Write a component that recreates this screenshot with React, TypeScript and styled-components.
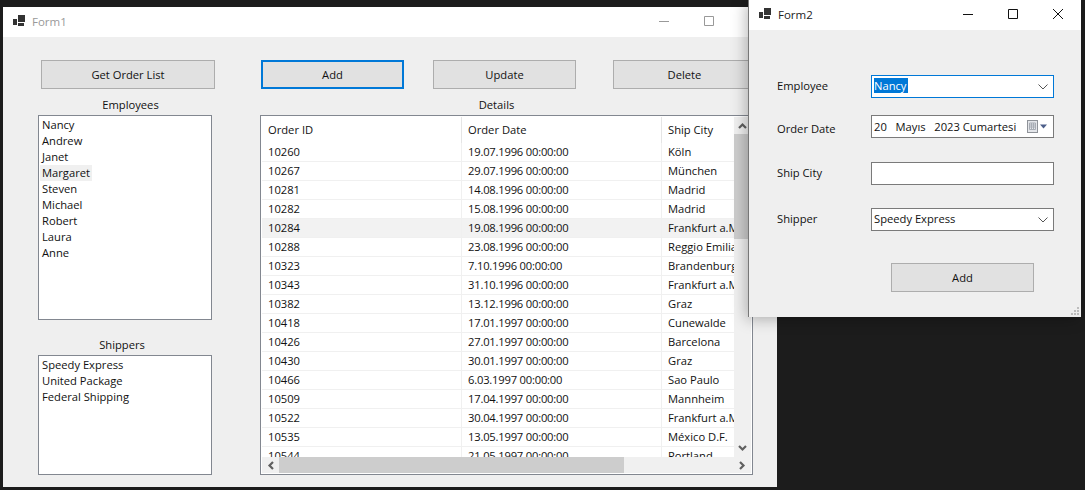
import React from "react";
import styled, { createGlobalStyle } from "styled-components";

const GlobalStyle = createGlobalStyle`
  html, body {
    margin: 0;
    height: 100%;
    background: #1c1c1c;
    overflow: hidden;
  }
  body {
    font-family: "Open Sans", "Noto Sans", "Liberation Sans", sans-serif;
    font-size: 11.2px;
    color: #111;
  }
`;

const Desktop = styled.div`
  position: relative;
  width: 1085px;
  height: 490px;
  background: #1c1c1c;
`;

const Window = styled.div<{ $front?: boolean }>`
  position: absolute;
  top: ${({ $front }) => ($front ? "0" : "7px")};
  left: ${({ $front }) => ($front ? "749px" : "3px")};
  width: ${({ $front }) => ($front ? "332px" : "774px")};
  height: ${({ $front }) => ($front ? "317px" : "480px")};
  background: #efefef;
  display: flex;
  flex-direction: column;
  z-index: ${({ $front }) => ($front ? 2 : 1)};
  box-shadow: ${({ $front }) => ($front ? "-1px 0 0 #777, -3px 2px 14px rgba(0, 0, 0, 0.28)" : "none")};
`;

const TitleBar = styled.div`
  box-sizing: border-box;
  height: 30px;
  padding-bottom: 2px;
  flex: none;
  background: #fff;
  display: flex;
  align-items: center;
`;

const AppIcon = styled.svg`
  margin-left: 10px;
  margin-top: -1px;
  width: 12px;
  height: 11px;
  flex: none;
`;

const Title = styled.span<{ $dim?: boolean }>`
  margin-left: 7px;
  font-size: 11.5px;
  color: ${({ $dim }) => ($dim ? "#999" : "#222")};
`;

const Caption = styled.div`
  margin-left: auto;
  padding-right: 1px;
  display: flex;
`;

const CaptionButton = styled.div`
  width: 45px;
  height: 28px;
  display: flex;
  align-items: center;
  justify-content: center;
`;

const Form1Body = styled.div`
  flex: 1;
  display: flex;
  padding: 23px 0 0 35px;
  min-height: 0;
`;

const LeftColumn = styled.div`
  width: 178px;
  margin-right: 44px;
  display: flex;
  flex-direction: column;
`;

const RightColumn = styled.div`
  width: 497px;
  display: flex;
  flex-direction: column;
`;

const ActionRow = styled.div`
  display: flex;
  padding-left: 1px;
  height: 29px;
  flex: none;
`;

const Button = styled.button<{ $focused?: boolean; $gap?: number }>`
  box-sizing: border-box;
  width: 143px;
  margin-right: ${({ $gap }) => $gap ?? 0}px;
  height: 29px;
  padding: 0;
  flex: none;
  background: #e1e1e1;
  border: ${({ $focused }) => ($focused ? "2px solid #0078d7" : "1px solid #adadad")};
  font: inherit;
  color: #111;
`;

const WideButton = styled(Button)`
  margin-left: 3px;
  width: 174px;
`;

const GroupLabel = styled.div<{ $top?: number; $width: number }>`
  box-sizing: border-box;
  width: ${({ $width }) => $width}px;
  height: 26px;
  margin-top: ${({ $top }) => $top ?? 0}px;
  line-height: 16px;
  padding-top: 8px;
  text-align: center;
  flex: none;
`;

const ListBox = styled.div<{ $height: number }>`
  box-sizing: border-box;
  width: 174px;
  height: ${({ $height }) => $height}px;
  background: #fff;
  border: 1px solid #828790;
  padding: 1px;
  flex: none;
`;

const ListItem = styled.div<{ $hover?: boolean }>`
  height: 16px;
  line-height: 16px;
  padding-left: 2px;
  width: ${({ $hover }) => ($hover ? "50px" : "auto")};
  background: ${({ $hover }) => ($hover ? "#f0f0f0" : "transparent")};
`;

const GridFrame = styled.div`
  box-sizing: border-box;
  width: 493px;
  height: 360px;
  background: #fff;
  border: 1px solid #828790;
  padding: 1px;
  display: flex;
  flex-direction: column;
  flex: none;
`;

const GridMain = styled.div`
  flex: 1;
  display: flex;
  min-height: 0;
`;

const GridClip = styled.div`
  flex: 1;
  overflow: hidden;
  min-width: 0;
`;

const Table = styled.div`
  width: 640px;
`;

const HeaderRow = styled.div`
  display: grid;
  grid-template-columns: 200px 200px 240px;
  height: 26px;
`;

const HeaderCell = styled.div`
  box-sizing: border-box;
  line-height: 25px;
  padding-left: 6px;
  border-right: 1px solid #e5e5e5;
`;

const Row = styled.div<{ $hover?: boolean }>`
  display: grid;
  grid-template-columns: 200px 200px 240px;
  height: 19px;
  box-sizing: border-box;
  border-bottom: 1px solid #f0f0f0;
  background: ${({ $hover }) => ($hover ? "#f2f2f2" : "#fff")};
`;

const Cell = styled.div`
  box-sizing: border-box;
  line-height: 18px;
  padding-left: 6px;
  border-right: 1px solid #f0f0f0;
  white-space: nowrap;
  overflow: hidden;
`;

const DateCell = styled(Cell)`
  letter-spacing: -0.2px;
`;

const VScroll = styled.div`
  width: 17px;
  background: #f0f0f0;
  display: flex;
  flex-direction: column;
  flex: none;
`;

const HScroll = styled.div`
  height: 16px;
  background: #f0f0f0;
  display: flex;
  align-items: stretch;
  flex: none;
`;

const ArrowBox = styled.div`
  width: 17px;
  height: 17px;
  flex: none;
  display: flex;
  align-items: center;
  justify-content: center;
`;

const HArrowBox = styled(ArrowBox)`
  height: 16px;
`;

const ArrowGlyph = styled.svg<{ $turn: number }>`
  width: 9px;
  height: 9px;
  transform: rotate(${({ $turn }) => $turn}deg);
`;

const VThumb = styled.div`
  width: 17px;
  height: 105px;
  background: #cdcdcd;
`;

const HThumb = styled.div`
  width: 345px;
  background: #cdcdcd;
`;

const ScrollSpacer = styled.div`
  flex: 1;
`;

const Form2Body = styled.div`
  flex: 1;
  position: relative;
  padding: 45px 0 0 28px;
  display: flex;
  flex-direction: column;
`;

const FieldRow = styled.div<{ $height: number }>`
  display: flex;
  align-items: flex-start;
  height: ${({ $height }) => $height}px;
  flex: none;
`;

const FieldLabel = styled.div<{ $drop?: number }>`
  width: 94px;
  flex: none;
  line-height: 21px;
  padding-top: ${({ $drop }) => $drop ?? 0}px;
`;

const Control = styled.div<{ $focused?: boolean; $raise?: number }>`
  box-sizing: border-box;
  width: 183px;
  height: 23px;
  background: #fff;
  border: 1px solid ${({ $focused }) => ($focused ? "#0078d7" : "#7a7a7a")};
  display: flex;
  align-items: center;
  padding: 0 4px ${({ $raise }) => $raise ?? 1}px 2px;
`;

const Selected = styled.span`
  background: #0078d7;
  color: #fff;
  line-height: 15px;
  padding: 0 2px 0 0;
`;

const ControlText = styled.span`
  white-space: pre;
`;

const ComboArrow = styled.svg`
  margin-left: auto;
  margin-right: 1px;
  margin-top: 3px;
  width: 10px;
  height: 6px;
  flex: none;
`;

const CalendarIcon = styled.svg`
  margin-left: auto;
  margin-right: 1px;
  width: 21px;
  height: 13px;
  flex: none;
`;

const SubmitRow = styled.div`
  padding-left: 114px;
`;

const Grip = styled.svg`
  position: absolute;
  right: 1px;
  bottom: 1px;
  width: 9px;
  height: 9px;
`;

const rows: [string, string, string][] = [
  ["10260", "19.07.1996 00:00:00", "Köln"],
  ["10267", "29.07.1996 00:00:00", "München"],
  ["10281", "14.08.1996 00:00:00", "Madrid"],
  ["10282", "15.08.1996 00:00:00", "Madrid"],
  ["10284", "19.08.1996 00:00:00", "Frankfurt a.M."],
  ["10288", "23.08.1996 00:00:00", "Reggio Emilia"],
  ["10323", "7.10.1996 00:00:00", "Brandenburg"],
  ["10343", "31.10.1996 00:00:00", "Frankfurt a.M."],
  ["10382", "13.12.1996 00:00:00", "Graz"],
  ["10418", "17.01.1997 00:00:00", "Cunewalde"],
  ["10426", "27.01.1997 00:00:00", "Barcelona"],
  ["10430", "30.01.1997 00:00:00", "Graz"],
  ["10466", "6.03.1997 00:00:00", "Sao Paulo"],
  ["10509", "17.04.1997 00:00:00", "Mannheim"],
  ["10522", "30.04.1997 00:00:00", "Frankfurt a.M."],
  ["10535", "13.05.1997 00:00:00", "México D.F."],
  ["10544", "21.05.1997 00:00:00", "Portland"],
];

const employees = ["Nancy", "Andrew", "Janet", "Margaret", "Steven", "Michael", "Robert", "Laura", "Anne"];
const shippers = ["Speedy Express", "United Package", "Federal Shipping"];

const FormIcon = () => (
  <AppIcon viewBox="0 0 12 11">
    <path d="M5 0h7v7H5zM0 4h4v6H0zM5 8h6v3H5z" fill="#333" />
  </AppIcon>
);

const Minimize = ({ color }: { color: string }) => (
  <svg width="10" height="10" viewBox="0 0 10 10">
    <path d="M0 5.5h10" stroke={color} fill="none" />
  </svg>
);

const Maximize = ({ color }: { color: string }) => (
  <svg width="10" height="10" viewBox="0 0 10 10">
    <path d="M.5.5h9v9h-9z" stroke={color} fill="none" />
  </svg>
);

const Close = ({ color }: { color: string }) => (
  <svg width="10" height="10" viewBox="0 0 10 10">
    <path d="M0 0l10 10M10 0L0 10" stroke={color} fill="none" />
  </svg>
);

const Chevron = () => (
  <ComboArrow viewBox="0 0 10 6">
    <path d="M.5.5L5 5 9.500.5" stroke="#555" fill="none" />
  </ComboArrow>
);

// chunky scrollbar arrow, pointing up before it is turned
const ScrollArrow = ({ turn }: { turn: number }) => (
  <ArrowGlyph $turn={turn} viewBox="0 0 9 9">
    <path d="M1 7L4.500 3.500 8 7" stroke="#606060" strokeWidth="2.200" fill="none" />
  </ArrowGlyph>
);

export default function App() {
  return (
    <Desktop>
      <GlobalStyle />
      <Window>
        <TitleBar>
          <FormIcon />
          <Title $dim>Form1</Title>
          <Caption>
            <CaptionButton><Minimize color="#999" /></CaptionButton>
            <CaptionButton><Maximize color="#999" /></CaptionButton>
            <CaptionButton><Close color="#999" /></CaptionButton>
          </Caption>
        </TitleBar>
        <Form1Body>
          <LeftColumn>
            <WideButton>Get Order List</WideButton>
            <GroupLabel $width={185}>Employees</GroupLabel>
            <ListBox $height={205}>
              {employees.map((name) => (
                <ListItem key={name} $hover={name === "Margaret"}>{name}</ListItem>
              ))}
            </ListBox>
            <GroupLabel $top={9} $width={168}>Shippers</GroupLabel>
            <ListBox $height={120}>
              {shippers.map((name) => (
                <ListItem key={name}>{name}</ListItem>
              ))}
            </ListBox>
          </LeftColumn>
          <RightColumn>
            <ActionRow>
              <Button $focused $gap={29}>Add</Button>
              <Button $gap={37}>Update</Button>
              <Button>Delete</Button>
            </ActionRow>
            <GroupLabel $width={473}>Details</GroupLabel>
            <GridFrame>
              <GridMain>
                <GridClip>
                  <Table>
                    <HeaderRow>
                      <HeaderCell>Order ID</HeaderCell>
                      <HeaderCell>Order Date</HeaderCell>
                      <HeaderCell>Ship City</HeaderCell>
                    </HeaderRow>
                    {rows.map((r) => (
                      <Row key={r[0]} $hover={r[0] === "10284"}>
                        <Cell>{r[0]}</Cell>
                        <DateCell>{r[1]}</DateCell>
                        <Cell>{r[2]}</Cell>
                      </Row>
                    ))}
                  </Table>
                </GridClip>
                <VScroll>
                  <ArrowBox><ScrollArrow turn={0} /></ArrowBox>
                  <VThumb />
                  <ScrollSpacer />
                  <ArrowBox><ScrollArrow turn={180} /></ArrowBox>
                </VScroll>
              </GridMain>
              <HScroll>
                <HArrowBox><ScrollArrow turn={270} /></HArrowBox>
                <HThumb />
                <ScrollSpacer />
                <HArrowBox><ScrollArrow turn={90} /></HArrowBox>
              </HScroll>
            </GridFrame>
          </RightColumn>
        </Form1Body>
      </Window>

      <Window $front>
        <TitleBar>
          <FormIcon />
          <Title>Form2</Title>
          <Caption>
            <CaptionButton><Minimize color="#111" /></CaptionButton>
            <CaptionButton><Maximize color="#111" /></CaptionButton>
            <CaptionButton><Close color="#111" /></CaptionButton>
          </Caption>
        </TitleBar>
        <Form2Body>
          <FieldRow $height={40}>
            <FieldLabel>Employee</FieldLabel>
            <Control $focused $raise={3}>
              <Selected>Nancy</Selected>
              <Chevron />
            </Control>
          </FieldRow>
          <FieldRow $height={47}>
            <FieldLabel $drop={3}>Order Date</FieldLabel>
            <Control>
              <ControlText>20   Mayıs   2023 Cumartesi</ControlText>
              <CalendarIcon viewBox="0 0 21 13">
                <rect x="0.500" y="0.500" width="10" height="12" fill="#e4e6ea" stroke="#8f9399" />
                <path d="M2.500 3h6v6.500h-6zM2.500 5h6M2.500 7h6M4.500 3v6.500M6.500 3v6.500" stroke="#a8adb5" fill="none" />
                <path d="M13 4.500h7L16.500 8.500z" fill="#4d5f8a" />
              </CalendarIcon>
            </Control>
          </FieldRow>
          <FieldRow $height={46}>
            <FieldLabel>Ship City</FieldLabel>
            <Control />
          </FieldRow>
          <FieldRow $height={55}>
            <FieldLabel>Shipper</FieldLabel>
            <Control $raise={3}>
              <ControlText>Speedy Express</ControlText>
              <Chevron />
            </Control>
          </FieldRow>
          <SubmitRow>
            <Button>Add</Button>
          </SubmitRow>
          <Grip viewBox="0 0 9 9">
            <path d="M6 0h2v2H6zM3 3h2v2H3zM6 3h2v2H6zM0 6h2v2H0zM3 6h2v2H3zM6 6h2v2H6z" fill="#bdbdbd" />
          </Grip>
        </Form2Body>
      </Window>
    </Desktop>
  );
}
